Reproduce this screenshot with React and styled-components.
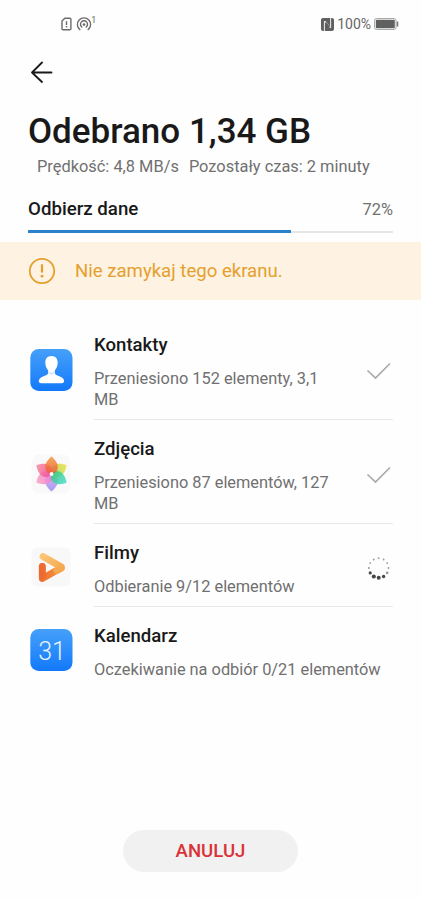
import styled, { createGlobalStyle } from "styled-components";

const GlobalStyle = createGlobalStyle`
    body {
        margin: 0;
        background-color: #fefefe;
        font-family: Roboto, "Noto Sans", sans-serif;
        color: #191919;
    }
`;

const Screen = styled.div`
    display: flex;
    flex-direction: column;
    width: 421px;
    height: 900px;
    box-sizing: border-box;
    overflow: hidden;
`;

const StatusBar = styled.div`
    display: flex;
    justify-content: space-between;
    align-items: center;
    height: 48px;
    padding: 0 22px 0 61px;
`;

const StatusGroup = styled.div`
    display: flex;
    align-items: center;
    gap: ${(props) => props.$gap}px;
`;

const StatusText = styled.span`
    font-size: 14px;
    line-height: 16px;
    color: #666;
`;

const TopBar = styled.div`
    display: flex;
    align-items: center;
    height: 48px;
    padding-left: 30px;
`;

const BackButton = styled.button`
    display: flex;
    padding: 0;
    border: none;
    background: none;
    cursor: pointer;
`;

const Header = styled.header`
    padding: 14px 28px 0;
`;

const Title = styled.h1`
    margin: 0;
    font-size: 35px;
    line-height: 44px;
    font-weight: 500;
    white-space: nowrap;
`;

const Stats = styled.div`
    display: flex;
    gap: 10px;
    padding: 2px 0 0 9px;
    font-size: 16.4px;
    line-height: 21px;
    color: #707070;
    white-space: nowrap;
`;

const ProgressHeader = styled.div`
    display: flex;
    justify-content: space-between;
    align-items: center;
    height: 24px;
    margin-top: 20px;
`;

const ProgressLabel = styled.span`
    font-size: 18.7px;
    font-weight: 500;
`;

const ProgressValue = styled.span`
    font-size: 16.4px;
    color: #707070;
`;

const Track = styled.div`
    display: flex;
    align-items: center;
    height: 3px;
    margin-top: 9px;
    background: linear-gradient(#e6e6e6, #e6e6e6) center / 100% 2px no-repeat;
`;

const Fill = styled.div`
    height: 2.6px;
    background-color: #2a82ca;
`;

const Notice = styled.div`
    display: flex;
    align-items: center;
    gap: 19px;
    height: 58px;
    margin-top: 9px;
    padding-left: 28px;
    background-color: #fef2e3;
    color: #e5a02c;
    font-size: 18.6px;
`;

const List = styled.ul`
    flex: 1;
    margin: 0;
    padding: 16px 28px 0 30px;
    list-style: none;
`;

const Item = styled.li`
    display: flex;
    gap: 21px;
`;

const IconCell = styled.div`
    display: flex;
    align-items: center;
    padding: 17px 0 14px;
`;

const Body = styled.div`
    flex: 1;
    display: flex;
    align-items: center;
    padding: 17px 0 9px;
    border-bottom: 1px solid ${(props) => (props.$last ? "transparent" : "#e8e8e8")};
`;

const Texts = styled.div`
    flex: 1;
`;

const Name = styled.div`
    font-size: 18.6px;
    line-height: 24px;
    font-weight: 500;
`;

const Detail = styled.div`
    width: ${(props) => (props.$wrap ? "240px" : "auto")};
    margin-top: 11px;
    font-size: 16.35px;
    line-height: 21px;
    color: #707070;
    white-space: ${(props) => (props.$wrap ? "normal" : "nowrap")};
`;

const State = styled.div`
    display: flex;
    margin: 0 1px 2px 0;
`;

const Footer = styled.footer`
    display: flex;
    justify-content: center;
    padding-bottom: 28px;
`;

const CancelButton = styled.button`
    width: 175px;
    height: 42px;
    border: none;
    border-radius: 21px;
    background-color: #f1f1f1;
    color: #da3238;
    font-family: inherit;
    font-size: 18.6px;
    font-weight: 500;
    cursor: pointer;
`;

const SimIcon = () => (
    <svg width="11" height="14" viewBox="0 0 11 14" fill="none" stroke="#6b6b6b" strokeWidth="1.4">
        <path d="M3.8 1.2h5.1q1 0 1 1v9.6q0 1-1 1H2q-1 0-1-1V4z" strokeLinejoin="round" />
        <path d="M5.5 4.3v3.6M5.5 9v1.4" />
    </svg>
);

const HotspotIcon = () => (
    <svg width="22" height="18" viewBox="0 0 22 18" fill="none" stroke="#6b6b6b" strokeWidth="1.4" strokeLinecap="round">
        <path d="M3.9 14.6a6.6 6.6 0 1 1 8.2 0" />
        <path d="M5.8 12a3.5 3.5 0 1 1 4.4 0" />
        <circle cx="8" cy="9.6" r="1.3" fill="#6b6b6b" stroke="none" />
        <text x="15" y="7.5" fontSize="9.5" fill="#6b6b6b" stroke="none">1</text>
    </svg>
);

const NfcIcon = () => (
    <svg width="13" height="13" viewBox="0 0 13 13">
        <rect width="13" height="13" rx="2" fill="#606060" />
        <path d="M3.4 13V3.2l5.2 6.6M9.6 0v9.8L4.4 3.2" fill="none" stroke="#fefefe" strokeWidth="0.9" />
        <path d="M4.6 4.7l3.8 4.8" stroke="#606060" strokeWidth="2" />
    </svg>
);

const BatteryIcon = () => (
    <svg width="25" height="12" viewBox="0 0 25 12">
        <rect x="0.5" y="0.5" width="21.5" height="11" rx="2" fill="#fefefe" stroke="#aaa" />
        <rect x="1.8" y="1.8" width="19" height="8.4" rx="0.6" fill="#606060" />
        <path d="M22.7 3.5h1q.6 0 .6.6v3.8q0 .6-.6.6h-1z" fill="#777" />
    </svg>
);

const BackIcon = () => (
    <svg width="23" height="22" viewBox="0 0 23 22" fill="none" stroke="#191919" strokeWidth="1.8" strokeLinecap="round" strokeLinejoin="round">
        <path d="M12 1.5 2 11.5l10 9.5M2 11.5h19.5" />
    </svg>
);

const WarningIcon = () => (
    <svg width="28" height="28" viewBox="0 0 28 28" fill="none" stroke="#e5a02c">
        <circle cx="14" cy="14" r="12.2" strokeWidth="1.8" />
        <path d="M14 7.3v8.3" strokeWidth="2.2" />
        <circle cx="14" cy="19.2" r="1.4" fill="#e5a02c" stroke="none" />
    </svg>
);

const ContactsIcon = () => (
    <svg width="43" height="42" viewBox="0 0 43 42">
        <defs>
            <linearGradient id="contacts" x2="0" y2="1">
                <stop stopColor="#46a0fa" />
                <stop offset="1" stopColor="#1279fa" />
            </linearGradient>
        </defs>
        <rect x="0.3" width="42.2" height="42" rx="8.5" fill="url(#contacts)" />
        <path
            d="M21.5 7c4 0 6.2 2.8 6.2 6.6 0 3.3-1.2 6-2.9 7.8v2.4c0 1.7 1.5 2.2 3.4 2.9 3.2 1.1 5.6 2.4 5.9 5.1.1 1.6-.8 2.4-2.4 2.4H11.1c-1.6 0-2.5-.8-2.3-2.4.3-2.7 2.7-4 5.9-5.1 2-.7 3.5-1.2 3.5-2.9v-2.4c-1.7-1.8-2.9-4.5-2.9-7.8C15.3 9.8 17.5 7 21.5 7z"
            fill="#fff"
        />
        <path d="M18.2 22.2q3.3 2.5 6.6 0v2l-3.3 2-3.3-2z" fill="#dbeaf8" />
    </svg>
);

const petals = [
    { angle: 180, from: "#d6aaf5", to: "#9688ee" },
    { angle: 240, from: "#f07ad8", to: "#f8a4bc" },
    { angle: 300, from: "#ee509a", to: "#fa8a9c" },
    { angle: 60, from: "#9ade55", to: "#f4dc45" },
    { angle: 120, from: "#3bc880", to: "#45dcd0" },
    { angle: 0, from: "#ed5a3a", to: "#f69a3c" },
];

const GalleryIcon = () => (
    <svg width="43" height="42" viewBox="0 0 43 42">
        <defs>
            {petals.map((petal) => (
                <linearGradient key={petal.angle} id={`petal${petal.angle}`} x1="0" y1="1" x2="0" y2="0">
                    <stop stopColor={petal.from} />
                    <stop offset="1" stopColor={petal.to} />
                </linearGradient>
            ))}
        </defs>
        <rect x="1.5" y="1.5" width="39" height="39" rx="8" fill="#f9f9f9" />
        {petals.map((petal) => (
            <path
                key={petal.angle}
                d="M21.5 20.5c-4.500 0-6.300-3-6.300-6.400 0-4.100 3-7.800 6.300-10.600 3.300 2.800 6.300 6.500 6.300 10.600 0 3.400-1.800 6.400-6.300 6.400z"
                fill={`url(#petal${petal.angle})`}
                fillOpacity="0.85"
                transform={`rotate(${petal.angle} 21.5 21)`}
            />
        ))}
        <circle cx="21.5" cy="21" r="1.9" fill="#fff" />
    </svg>
);

const VideoIcon = () => (
    <svg width="43" height="42" viewBox="0 0 43 42" fill="none" strokeWidth="6.8" strokeLinecap="round" strokeLinejoin="round">
        <defs>
            <linearGradient id="videoLow" x1="0" y1="0" x2="1" y2="0">
                <stop stopColor="#ef7034" />
                <stop offset="1" stopColor="#f6943c" />
            </linearGradient>
            <linearGradient id="videoTop" x1="0" y1="0" x2="1" y2="1">
                <stop stopColor="#fbc575" />
                <stop offset="1" stopColor="#f5a64b" />
            </linearGradient>
        </defs>
        <rect x="1.5" y="1.5" width="39" height="39" rx="6" fill="#f8f8f8" />
        <path d="M12.3 20.5v12L31 22" stroke="url(#videoLow)" />
        <path d="M13 10.5l18.5 10.5v1l-4.5 2.5" stroke="url(#videoTop)" />
        <path d="M12.3 20.5v9" stroke="#ed6a2f" strokeOpacity="0.7" />
    </svg>
);

const CalendarIcon = () => (
    <svg width="43" height="42" viewBox="0 0 43 42">
        <defs>
            <linearGradient id="calendar" x2="0" y2="1">
                <stop stopColor="#46a0fa" />
                <stop offset="1" stopColor="#1279fa" />
            </linearGradient>
        </defs>
        <rect x="0.3" width="42.2" height="42" rx="8.5" fill="url(#calendar)" />
        <text x="22" y="30.5" textAnchor="middle" fontSize="25" fontWeight="300" fill="#e8f4ff">31</text>
    </svg>
);

const DoneIcon = () => (
    <svg width="27" height="18" viewBox="0 0 27 18" fill="none" stroke="#aaa" strokeWidth="1.7">
        <path d="M2.5 8.5l8 7.5L25 1.5" />
    </svg>
);

const dotSizes = [0.9, 0.9, 0.9, 0.9, 1.3, 1.7, 2, 2.1, 1.6, 1, 0.9, 0.9];

const Spinner = () => (
    <svg width="27" height="26" viewBox="0 0 27 26">
        {dotSizes.map((r, i) => {
            const angle = (i * Math.PI) / 6;
            return (
                <circle
                    key={i}
                    cx={13.7 + Math.sin(angle) * 9.8}
                    cy={13 - Math.cos(angle) * 9.8}
                    r={r}
                    fill={r > 1.4 ? "#484848" : "#999"}
                />
            );
        })}
    </svg>
);

const items = [
    { name: "Kontakty", detail: "Przeniesiono 152 elementy, 3,1 MB", icon: <ContactsIcon />, state: <DoneIcon />, wrap: true },
    { name: "Zdjęcia", detail: "Przeniesiono 87 elementów, 127 MB", icon: <GalleryIcon />, state: <DoneIcon />, wrap: true },
    { name: "Filmy", detail: "Odbieranie 9/12 elementów", icon: <VideoIcon />, state: <Spinner /> },
    { name: "Kalendarz", detail: "Oczekiwanie na odbiór 0/21 elementów", icon: <CalendarIcon /> },
];

export default function App() {
    const percent = 72;

    return (
        <>
            <GlobalStyle />
            <Screen>
                <StatusBar>
                    <StatusGroup $gap={4}>
                        <SimIcon />
                        <HotspotIcon />
                    </StatusGroup>
                    <StatusGroup $gap={3}>
                        <NfcIcon />
                        <StatusText>100%</StatusText>
                        <BatteryIcon />
                    </StatusGroup>
                </StatusBar>
                <TopBar>
                    <BackButton aria-label="Wstecz">
                        <BackIcon />
                    </BackButton>
                </TopBar>
                <Header>
                    <Title>Odebrano 1,34 GB</Title>
                    <Stats>
                        <span>Prędkość: 4,8 MB/s</span>
                        <span>Pozostały czas: 2 minuty</span>
                    </Stats>
                    <ProgressHeader>
                        <ProgressLabel>Odbierz dane</ProgressLabel>
                        <ProgressValue>{percent}%</ProgressValue>
                    </ProgressHeader>
                    <Track>
                        <Fill style={{ width: `${percent}%` }} />
                    </Track>
                </Header>
                <Notice>
                    <WarningIcon />
                    <span>Nie zamykaj tego ekranu.</span>
                </Notice>
                <List>
                    {items.map((item, i) => (
                        <Item key={item.name}>
                            <IconCell>{item.icon}</IconCell>
                            <Body $last={i === items.length - 1}>
                                <Texts>
                                    <Name>{item.name}</Name>
                                    <Detail $wrap={item.wrap}>{item.detail}</Detail>
                                </Texts>
                                {item.state && <State>{item.state}</State>}
                            </Body>
                        </Item>
                    ))}
                </List>
                <Footer>
                    <CancelButton>ANULUJ</CancelButton>
                </Footer>
            </Screen>
        </>
    );
}
